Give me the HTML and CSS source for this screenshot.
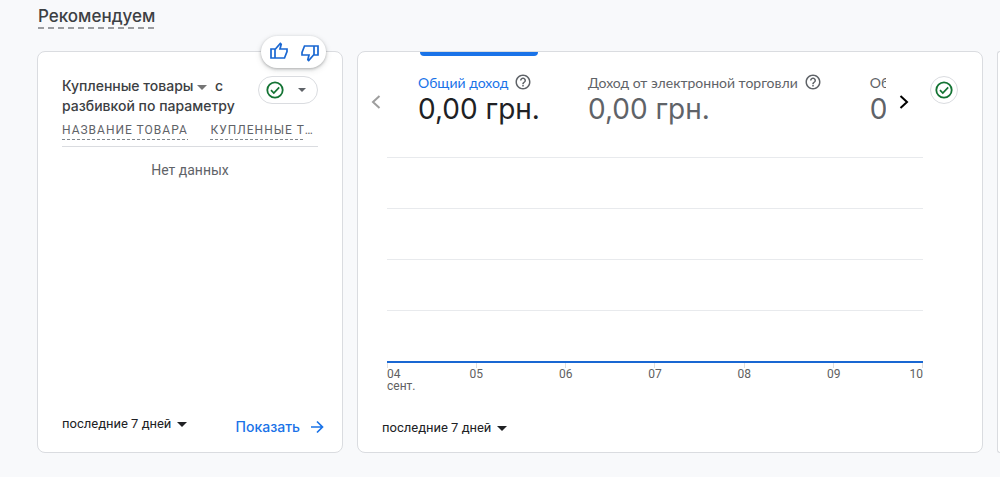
FILE: index.html
```html
<!DOCTYPE html>
<html lang="ru">
<head>
<meta charset="utf-8">
<title>Рекомендуем</title>
<link rel="stylesheet" href="styles.css">
</head>
<body>
<svg class="defs" aria-hidden="true">
  <symbol id="check" viewBox="0 0 20 20"><circle cx="10" cy="10" r="7.7" fill="none" stroke="currentColor" stroke-width="1.8"/><path d="M6 10.2l2.8 2.8L14.2 7.4" fill="none" stroke="currentColor" stroke-width="1.7"/></symbol>
  <symbol id="help" viewBox="0 0 24 24"><path fill="currentColor" d="M11 18h2v-2h-2v2zm1-16C6.48 2 2 6.48 2 12s4.480 10 10 10 10-4.480 10-10S17.520 2 12 2zm0 18c-4.410 0-8-3.590-8-8s3.590-8 8-8 8 3.590 8 8-3.590 8-8 8zm0-14c-2.210 0-4 1.790-4 4h2c0-1.100.9-2 2-2s2 .9 2 2c0 2-3 1.750-3 5h2c0-2.250 3-2.500 3-5 0-2.210-1.790-4-4-4z"/></symbol>
  <symbol id="caret" viewBox="0 0 10 5"><path fill="currentColor" d="M0 0h10L5 5z"/></symbol>
  <symbol id="thumb" viewBox="0 0 20 20"><path fill="none" stroke="currentColor" stroke-width="1.7" d="M2 8h4v9h-4zM6 8.500L11.300 2.500L12.200 3.300L11 8H18v2.500L15.500 17H6z"/></symbol>
</svg>
<main class="page">
  <h1 class="heading"><span class="heading-text">Рекомендуем</span></h1>
  <div class="cards">
    <section class="card items">
      <div class="feedback">
        <button class="icon-button" aria-label="Нравится"><svg class="icon-thumb"><use href="#thumb"/></svg></button>
        <button class="icon-button lower" aria-label="Не нравится"><svg class="icon-thumb down"><use href="#thumb"/></svg></button>
      </div>
      <header class="items-head">
        <h2 class="items-title">Купленные товары <button class="title-caret" aria-label="Показатель"><svg class="caret"><use href="#caret"/></svg></button> с разбивкой по параметру</h2>
        <button class="status-pill" aria-label="Качество данных"><svg class="icon-check"><use href="#check"/></svg><svg class="caret"><use href="#caret"/></svg></button>
      </header>
      <table class="items-table">
        <thead><tr><th><span class="term">НАЗВАНИЕ ТОВАРА</span></th><th><span class="term">КУПЛЕННЫЕ Т</span>…</th></tr></thead>
        <tbody><tr><td colspan="2">Нет данных</td></tr></tbody>
      </table>
      <footer class="card-foot">
        <button class="range">последние 7 дней<svg class="caret"><use href="#caret"/></svg></button>
        <a class="show" href="#">Показать<svg class="icon-arrow" viewBox="0 0 14 14"><path d="M1 7h11M7 1.500l5.500 5.500L7 12.500" fill="none" stroke="currentColor" stroke-width="1.700"/></svg></a>
      </footer>
    </section>
    <section class="card revenue">
      <div class="revenue-head">
        <button class="nav prev" aria-label="Назад"><svg class="icon-chevron" viewBox="0 0 10 14"><path d="M8.500 1L2 7l6.500 6" fill="none" stroke="currentColor" stroke-width="2"/></svg></button>
        <div class="tabs">
          <button class="tab active"><span class="tab-label">Общий доход<svg class="icon-help"><use href="#help"/></svg></span><span class="tab-value">0,00 грн.</span></button>
          <button class="tab"><span class="tab-label">Доход от электронной торговли<svg class="icon-help"><use href="#help"/></svg></span><span class="tab-value">0,00 грн.</span></button>
          <button class="tab"><span class="tab-label">Об</span><span class="tab-value">0</span></button>
        </div>
        <button class="nav next" aria-label="Вперёд"><svg class="icon-chevron" viewBox="0 0 10 14"><path d="M1.500 1L8 7l-6.500 6" fill="none" stroke="currentColor" stroke-width="2"/></svg></button>
        <button class="status-round" aria-label="Качество данных"><svg class="icon-check"><use href="#check"/></svg></button>
      </div>
      <div class="chart">
        <div class="plot"><i class="row"></i><i class="row"></i><i class="row"></i><i class="row"></i></div>
        <div class="axis">
          <span class="day">04<br>сент.</span><span class="day">05</span><span class="day">06</span><span class="day">07</span><span class="day">08</span><span class="day">09</span><span class="day">10</span>
        </div>
      </div>
      <footer class="card-foot">
        <button class="range">последние 7 дней<svg class="caret"><use href="#caret"/></svg></button>
      </footer>
    </section>
    <section class="card"></section>
  </div>
</main>
</body>
</html>
```
FILE: styles.css
```css
* { box-sizing: border-box; }
body { margin: 0; background: #f8f9fb; color: #3c4043; font-family: Roboto, sans-serif; }
button { margin: 0; padding: 0; border: 0; background: none; color: inherit; font: inherit; cursor: pointer; }
svg { display: block; flex: none; }
.defs { position: absolute; width: 0; height: 0; }

.page { padding: 4px 0 24px 37px; overflow: hidden; }
.heading { margin: 0 0 22px 1px; font: 500 17px/24px Inter, sans-serif; color: #3c4043; display: flex; }
.heading-text {
  height: 25px;
  background: repeating-linear-gradient(90deg, #9a9ca0 0 6px, transparent 6px 10px) left bottom / 100% 2px no-repeat;
}

.cards { display: grid; grid-template-columns: minmax(0, 306fr) minmax(0, 626fr) 3px; gap: 14px; }
.card {
  position: relative;
  display: flex;
  flex-direction: column;
  min-width: 0;
  min-height: 402px;
  border: 1px solid #dadce0;
  border-radius: 8px;
  background: #fff;
}
.card:last-child { border-right: 0; border-radius: 8px 0 0 8px; }

.items { padding: 24px 24px 15px; }
.feedback {
  position: absolute;
  top: -16px;
  right: 16px;
  display: flex;
  align-items: flex-start;
  justify-content: space-between;
  width: 65px;
  height: 32px;
  padding: 5px 6px 5px 8px;
  border-radius: 16px;
  background: #fff;
  color: #1967d2;
  box-shadow: 0 1px 3px rgba(60, 64, 67, .35), 0 2px 6px rgba(60, 64, 67, .15);
}
.lower { align-self: flex-end; }
.icon-thumb { width: 20px; height: 20px; }
.icon-thumb.down { transform: rotate(180deg); }

.items-head { display: flex; justify-content: space-between; align-items: flex-start; }
.items-title { flex: 1; margin: 0; font: 500 14px/20px Inter, sans-serif; }
.title-caret { vertical-align: middle; margin-right: 4px; }
.caret { width: 10px; height: 5px; }
.title-caret { color: #757575; }
.status-pill {
  display: flex;
  align-items: center;
  justify-content: space-between;
  width: 60px;
  height: 28px;
  padding: 0 11px 0 6px;
  border: 1px solid #dadce0;
  border-radius: 14px;
}
.icon-check { width: 20px; height: 20px; color: #137333; }
.status-pill .caret { width: 8px; height: 4px; color: #5f6368; }

.items-table { width: 100%; margin-top: 4px; border-collapse: collapse; table-layout: fixed; }
.items-table th {
  padding: 0 0 6px;
  border-bottom: 1px solid #dadce0;
  text-align: left;
  white-space: nowrap;
  font: 400 12px/20px Roboto, sans-serif;
  letter-spacing: 1px;
  color: #5f6368;
}
.items-table th:first-child { width: 58%; }
.term {
  display: inline-block;
  background: repeating-linear-gradient(90deg, #80868b 0 3px, transparent 3px 5px) left bottom / 100% 1px no-repeat;
}
.items-table td { padding: 13px 0 0; text-align: center; font-size: 14px; line-height: 20px; color: #5f6368; }

.card-foot { display: flex; justify-content: space-between; margin-top: auto; }
.range { display: flex; align-items: center; align-self: flex-start; gap: 6px; font-size: 13px; line-height: 16px; color: #202124; }
.show {
  display: flex;
  align-items: center;
  align-self: flex-end;
  gap: 10px;
  margin-right: -6px;
  color: #1a73e8;
  font: 500 14px/20px Inter, sans-serif;
  text-decoration: none;
}
.items .card-foot { min-height: 21px; }
.icon-arrow { width: 14px; height: 14px; }

.revenue { padding: 0 24px 16px; }
.revenue-head { display: flex; }
.nav { display: flex; justify-content: center; align-items: center; flex: none; height: 100px; color: #000; }
.prev { width: 12px; margin-left: -12px; color: #9e9e9e; }
.next { width: 36px; }
.icon-chevron { width: 10px; height: 14px; }
.tabs { display: flex; flex: 1; align-items: flex-start; gap: 48px; min-width: 0; overflow: hidden; padding-left: 36px; }
.tab { position: relative; flex: none; padding: 20px 0 0; text-align: left; color: #5f6368; }
.tab-label { display: flex; align-items: center; gap: 6px; height: 20px; font-size: 14px; font-family: Lato, sans-serif; white-space: nowrap; }
.tab-value { display: block; font: 400 28px/34px Inter, sans-serif; }
.tab.active { color: #202124; }
.active .tab-label { color: #1a73e8; }
.active::before {
  content: "";
  position: absolute;
  top: 0;
  left: 2px;
  right: 2px;
  height: 4px;
  border-radius: 0 0 4px 4px;
  background: #1a73e8;
}
.icon-help { width: 18px; height: 18px; color: #5f6368; }
.status-round {
  display: flex;
  align-items: center;
  justify-content: center;
  flex: none;
  width: 28px;
  height: 28px;
  margin: 24px 0 0 8px;
  border: 1px solid #dadce0;
  border-radius: 50%;
}

.chart { margin: 5px 35px 0 5px; }
.plot { display: grid; grid-auto-rows: 51px; border-bottom: 2px solid #1967d2; }
.row { border-top: 1px solid #e8eaed; }
.axis { display: flex; justify-content: space-between; font-size: 12px; line-height: 12px; color: #616161; }
.day { display: flex; flex-direction: column; align-items: center; width: 0; white-space: nowrap; }
.day::before { content: ""; display: block; width: 1px; height: 5px; background: #e0e0e0; }
.day:first-child { display: block; }
.day:last-child { align-items: flex-end; }
```
